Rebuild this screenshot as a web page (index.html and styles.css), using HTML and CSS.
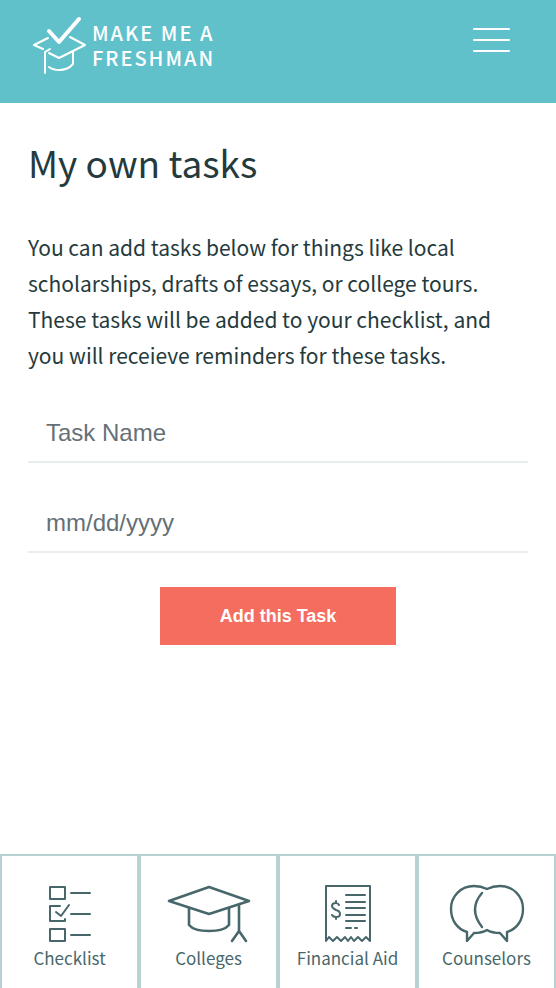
FILE: index.html
```html
<!DOCTYPE html>
<html lang="en">
<head>
    <meta charset="UTF-8">
    <meta name="viewport" content="width=device-width, initial-scale=1.0">
    <title>My own tasks</title>
    <link rel="stylesheet" href="styles.css">
</head>
<body>

    <header class="header">
        <a href="#" class="logo">
            <svg class="logo-mark" width="56" height="60" viewBox="0 0 56 60" fill="none" stroke="#fff" stroke-width="2" stroke-linecap="round" stroke-linejoin="round">
                <path d="M16 22L2 29l9 4"/>
                <path d="M38 21l15 8-26 13-10-5"/>
                <path d="M18 33l-5 3v21"/>
                <path d="M41 36v12q-5 6-14 6-6 0-10-3"/>
                <path d="M17 15l10 11L47 3" stroke-width="4"/>
            </svg>
            <span class="logo-text">MAKE ME A<br>FRESHMAN</span>
        </a>
        <button type="button" class="menu-button" aria-label="Menu">
            <span></span>
            <span></span>
            <span></span>
        </button>
    </header>

    <main class="content">
        <h1>My own tasks</h1>
        <p>You can add tasks below for things like local scholarships, drafts of essays, or college tours. These tasks will be added to your checklist, and you will receieve reminders for these tasks.</p>

        <form class="task-form">
            <input type="text" id="taskName" placeholder="Task Name" aria-label="Task Name">
            <input type="text" id="taskDate" placeholder="mm/dd/yyyy" aria-label="Task date">
            <button type="submit" class="add-button">Add this Task</button>
        </form>
    </main>

    <nav class="bottom-nav">
        <a href="#">
            <svg width="44" height="60" viewBox="0 0 44 60" fill="none" stroke="#48676a" stroke-width="2" stroke-linecap="round" stroke-linejoin="round">
                <path d="M2 3h15v12H2zM2 45h15v12H2z"/>
                <path d="M12 22H2v15h15v-2"/>
                <path d="M8 28l5 4 8-11"/>
                <path d="M23 9h19M23 30h19M23 51h19"/>
            </svg>
            <span>Checklist</span>
        </a>
        <a href="#">
            <svg width="84" height="60" viewBox="0 0 84 60" fill="none" stroke="#48676a" stroke-width="2.6" stroke-linecap="round" stroke-linejoin="round">
                <path d="M42 3l40 14-40 13L2 17z"/>
                <path d="M22 24v17q5 6 20 6t20-6V24"/>
                <path d="M72 21v26l-7 10M72 47l7 10"/>
            </svg>
            <span>Colleges</span>
        </a>
        <a href="#">
            <svg width="48" height="60" viewBox="0 0 48 60" fill="none" stroke="#48676a" stroke-width="2" stroke-linecap="round" stroke-linejoin="round">
                <path d="M2 57V2h44v55l-4-4-4 4-4-4-4 4-3-4-3 4-3-4-4 4-4-4-4 4-4-4z"/>
                <path d="M22 11h19M22 18h19M22 24h19M22 31h19M22 37h19M22 44h5M31 44h2"/>
                <path d="M15 21q-1-2-3-2-4 0-4 3 0 2 4 4 4 1 4 4t-4 3q-3 0-4-2M12 17v2M12 33v2"/>
            </svg>
            <span>Financial Aid</span>
        </a>
        <a href="#">
            <svg width="76" height="60" viewBox="0 0 76 60" fill="none" stroke="#48676a" stroke-width="2.4" stroke-linecap="round" stroke-linejoin="round">
                <path d="M38 5Q32 2 25 2C12 2 2 12 2 25c0 11 6 20 16 23v9l7-8q8 0 13-3 5 3 13 3l7 8v-9c10-3 16-12 16-23C74 12 64 2 51 2q-7 0-13 3z"/>
                <path d="M33 9Q19 25 33 43"/>
            </svg>
            <span>Counselors</span>
        </a>
    </nav>

</body>
</html>
```
FILE: styles.css
```css
* {
    box-sizing: border-box;
}

body {
    background-color: #fff;
    font-family: "Noto Sans CJK SC", sans-serif;
    color: #253a3c;
    margin: 0;
    min-height: 100vh;
    display: flex;
    flex-direction: column;
}

.header {
    background-color: #61c1cb;
    min-height: 103px;
    padding: 16px 46px 26px 32px;
    display: flex;
    justify-content: space-between;
    align-items: flex-start;
}

.logo {
    display: flex;
    gap: 4px;
    color: #fff;
    text-decoration: none;
}

.logo-text {
    font-size: 20px;
    font-weight: 500;
    line-height: 25px;
    letter-spacing: 2px;
    padding-top: 4px;
}

.menu-button {
    display: flex;
    flex-direction: column;
    gap: 9px;
    background: none;
    border: none;
    padding: 12px 0;
    cursor: pointer;
}

.menu-button span {
    width: 37px;
    height: 2px;
    border-radius: 1px;
    background-color: #fff;
}

.content {
    flex: 1;
    padding: 32px 28px;
}

h1 {
    font-size: 37px;
    font-weight: 400;
    line-height: 54px;
    margin: 0 0 40px;
}

p {
    font-size: 21px;
    line-height: 36px;
    margin: 0;
}

.task-form {
    display: flex;
    flex-direction: column;
    padding-top: 32px;
}

.task-form input {
    width: 100%;
    height: 58px;
    margin-bottom: 32px;
    padding: 0 18px;
    border: none;
    border-bottom: 2px solid #e8eeee;
    background: none;
    color: #253a3c;
    font-family: "Liberation Sans", Arial, sans-serif;
    font-size: 24px;
}

.task-form input::placeholder {
    color: #667077;
    opacity: 1;
}

.add-button {
    align-self: center;
    margin-top: 2px;
    background-color: #f56d5e;
    color: #fff;
    font-family: "Liberation Sans", Arial, sans-serif;
    font-size: 18px;
    font-weight: bold;
    line-height: 22px;
    padding: 18px 60px;
    border: none;
    cursor: pointer;
}

.bottom-nav {
    display: grid;
    grid-template-columns: repeat(4, 1fr);
    border-top: 2px solid #b8d1d3;
}

.bottom-nav a {
    display: flex;
    flex-direction: column;
    align-items: center;
    height: 132px;
    padding-top: 28px;
    border-left: 2px solid #b8d1d3;
    border-right: 2px solid #b8d1d3;
    color: #48676a;
    font-size: 17px;
    line-height: 28px;
    text-decoration: none;
}
```
